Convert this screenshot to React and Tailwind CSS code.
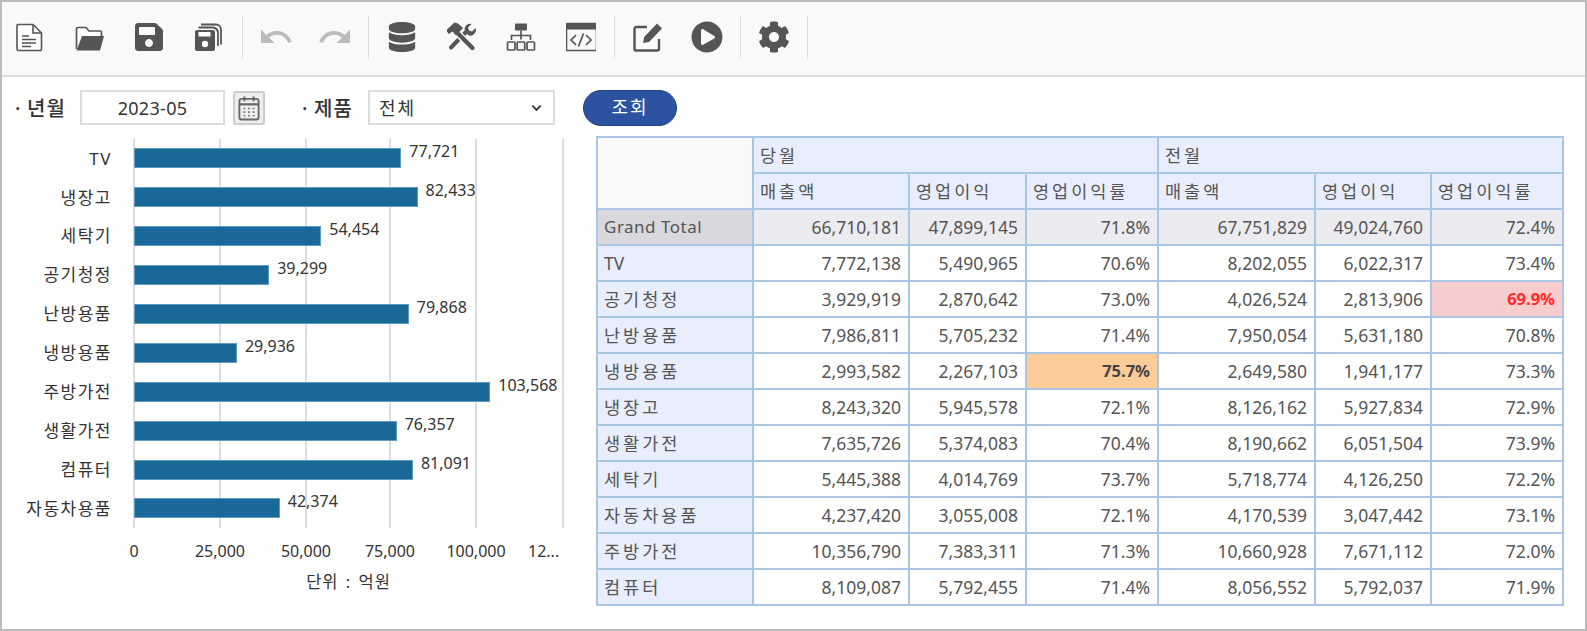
import React from "react";
import { MdUndo, MdRedo } from "react-icons/md";
import { FaDatabase, FaPlayCircle, FaCog, FaSave } from "react-icons/fa";

const C = "#555555";
const Ico = ({ children }) => (
  <svg viewBox="0 0 30 30" className="w-[30px] h-[30px] block" fill="none">{children}</svg>
);
const FileIc = () => (
  <Ico>
    <path d="M3 2.5h15l8.5 8.5v16a1.5 1.5 0 0 1-1.5 1.5H3.5A1.5 1.5 0 0 1 2 27V3.5A1 1 0 0 1 3 2.5z" fill="#fff" stroke={C} strokeWidth="1.6" />
    <path d="M18 2.5V11h8.5" stroke={C} strokeWidth="1.6" />
    <path d="M7 14h7M7 17.5h14M7 21h14M7 24.5h9" stroke={C} strokeWidth="1.5" />
  </Ico>
);
const FolderIc = () => (
  <Ico>
    <path d="M1.5 27V7a1.5 1.5 0 0 1 1.5-1.5h8l3 3.5h11a1.5 1.5 0 0 1 1.5 1.5V14" stroke={C} strokeWidth="1.7" fill="#fff" />
    <path d="M7 14h22l-4 14.5H1.5z" fill={C} />
  </Ico>
);
const SaveAllIc = () => (
  <Ico>
    <path d="M7 2.5h15a5 5 0 0 1 5 5v15" stroke={C} strokeWidth="1.8" />
    <path d="M4.5 5.5h15a6 6 0 0 1 4.5 4.5v14" stroke={C} strokeWidth="1.8" />
    <rect x="1" y="8" width="20" height="21" rx="2" fill={C} />
    <rect x="4.5" y="10" width="12" height="4.5" fill="#fff" />
    <circle cx="11" cy="22" r="3.2" fill="#fff" />
  </Ico>
);
const ToolsIc = () => (
  <Ico>
    <path d="M4 25.5L19 10" stroke={C} strokeWidth="4" strokeLinecap="round" />
    <path d="M17.5 7.5a5.5 5.5 0 0 1 7-5.5l-3.5 3.5 1 3 3 1L28.5 6a5.5 5.5 0 0 1-7.5 7z" fill={C} />
    <path d="M9 9.5L25 26" stroke="#f9f9fb" strokeWidth="7" />
    <path d="M9 9.5L25.5 26" stroke={C} strokeWidth="4.4" strokeLinecap="round" />
    <path d="M-1 8.5L7.5 0.5L11 1.5L16 6L9 13.5L5.5 9.5L2 12z" fill={C} />
  </Ico>
);
const SitemapIc = () => (
  <Ico>
    <rect x="9" y="1.5" width="12" height="7" rx="0.8" fill={C} />
    <path d="M15 8.5v9M5.5 18v-4.5h19V18" stroke={C} strokeWidth="1.7" />
    <rect x="1.5" y="20" width="7.5" height="8" rx="1" stroke={C} strokeWidth="1.7" />
    <rect x="11.2" y="20" width="7.5" height="8" rx="1" stroke={C} strokeWidth="1.7" />
    <rect x="21" y="20" width="7.5" height="8" rx="1" stroke={C} strokeWidth="1.7" />
  </Ico>
);
const CodeIc = () => (
  <Ico>
    <rect x="0.5" y="1.5" width="30" height="27" rx="1" stroke={C} strokeWidth="1.6" />
    <rect x="0" y="1" width="30" height="6.5" fill={C} />
    <path d="M10 13l-5 5 5 5M20 13l5 5-5 5M17.5 11.5l-5 13" stroke={C} strokeWidth="1.7" />
  </Ico>
);
const EditIc = () => (
  <Ico>
    <path d="M14 5H3.5A2 2 0 0 0 1.5 7v20a1.5 1.5 0 0 0 1.5 1.5h21a2 2 0 0 0 2-2V17" stroke={C} strokeWidth="2.4" />
    <path d="M10 21l1.2-6L24 1.5l5 5L16 20z" fill={C} />
  </Ico>
);
const CalIc = () => (
  <svg viewBox="0 0 24 28" className="w-[22px] h-[26px] block" fill="none">
    <rect x="1.5" y="4" width="21" height="22.5" rx="2.5" stroke="#666" strokeWidth="2" />
    <path d="M1.5 10h21" stroke="#666" strokeWidth="2.4" />
    <path d="M7 1.5v5M17 1.5v5" stroke="#666" strokeWidth="2.2" />
    <path d="M6 14.5h2M11 14.5h2M16 14.5h2M6 18.5h2M11 18.5h2M16 18.5h2M6 22.5h2M11 22.5h2M16 22.5h2" stroke="#777" strokeWidth="1.8" />
  </svg>
);
const Btn = ({ children }) => (
  <div className="w-[30px] h-[30px] flex items-center justify-center shrink-0">{children}</div>
);
const Sep = () => <div className="w-px h-[43px] bg-[#dddddd] shrink-0" />;

const bars = [
  ["TV", 77721],
  ["냉장고", 82433],
  ["세탁기", 54454],
  ["공기청정", 39299],
  ["난방용품", 79868],
  ["냉방용품", 29936],
  ["주방가전", 103568],
  ["생활가전", 76357],
  ["컴퓨터", 81091],
  ["자동차용품", 42374],
];
const grid = [0, 86, 172, 256, 342, 429];
const ticks = [
  ["0", 0],
  ["25,000", 86],
  ["50,000", 172],
  ["75,000", 256],
  ["100,000", 342],
];

const rows = [
  ["TV", "7,772,138", "5,490,965", "70.6%", "8,202,055", "6,022,317", "73.4%"],
  ["공기청정", "3,929,919", "2,870,642", "73.0%", "4,026,524", "2,813,906", "69.9%"],
  ["난방용품", "7,986,811", "5,705,232", "71.4%", "7,950,054", "5,631,180", "70.8%"],
  ["냉방용품", "2,993,582", "2,267,103", "75.7%", "2,649,580", "1,941,177", "73.3%"],
  ["냉장고", "8,243,320", "5,945,578", "72.1%", "8,126,162", "5,927,834", "72.9%"],
  ["생활가전", "7,635,726", "5,374,083", "70.4%", "8,190,662", "6,051,504", "73.9%"],
  ["세탁기", "5,445,388", "4,014,769", "73.7%", "5,718,774", "4,126,250", "72.2%"],
  ["자동차용품", "4,237,420", "3,055,008", "72.1%", "4,170,539", "3,047,442", "73.1%"],
  ["주방가전", "10,356,790", "7,383,311", "71.3%", "10,660,928", "7,671,112", "72.0%"],
  ["컴퓨터", "8,109,087", "5,792,455", "71.4%", "8,056,552", "5,792,037", "71.9%"],
];
const total = ["66,710,181", "47,899,145", "71.8%", "67,751,829", "49,024,760", "72.4%"];
const widths = [156, 156, 117, 132, 157, 116, 132];
const cellBase = "border-2 border-[#a9c6e4] pl-[6px] pr-[7px] h-[36px] overflow-hidden whitespace-nowrap";

function Chart() {
  return (
    <div className="w-[594px] shrink-0 pt-[14px] text-[#333333]">
      <div className="relative">
        {grid.map((x) => (
          <div key={x} className="absolute top-0 w-[2px] h-[389px] bg-[#dddddd]" style={{ left: 131 + x }} />
        ))}
        {bars.map(([name, v]) => (
          <div key={name} className="relative flex items-center h-[38.9px]">
            <div className="w-[132px] pr-[22px] text-right text-[17px] tracking-[1.5px] shrink-0">{name}</div>
            <div className="h-5 bg-[#1a6898] border border-[#5f9cc0]" style={{ width: v * 0.00344 }} />
            <div className="ml-[8px] -translate-y-[7px] text-[16px] leading-[20px]">{v.toLocaleString("en-US")}</div>
          </div>
        ))}
        <div className="relative h-[40px] text-[16px] leading-[20px]">
          {ticks.map(([t, x]) => (
            <div key={t} className="absolute top-[13px] -translate-x-1/2" style={{ left: 132 + x }}>{t}</div>
          ))}
          <div className="absolute top-[13px] left-[526px]">12...</div>
        </div>
      </div>
      <div className="pl-[132px] w-[561px] text-center text-[16.5px] tracking-[1px] leading-[20px] mt-[4px] [word-spacing:2px]">단위 : 억원</div>
    </div>
  );
}

function DataTable() {
  const th = "bg-[#e8eefd] font-normal text-left tracking-[3px]";
  return (
    <div className="pt-[11px]">
      <table className="table-fixed border-collapse w-[966px] text-[#555555] text-[17.5px]">
        <colgroup>
          {widths.map((w, i) => <col key={i} style={{ width: w }} />)}
        </colgroup>
        <thead>
          <tr>
            <th rowSpan={2} className={`${cellBase} bg-[#f9f9fc]`} />
            <th colSpan={3} className={`${cellBase} ${th}`}>당월</th>
            <th colSpan={3} className={`${cellBase} ${th}`}>전월</th>
          </tr>
          <tr>
            {["매출액", "영업이익", "영업이익률", "매출액", "영업이익", "영업이익률"].map((t, i) => (
              <th key={i} className={`${cellBase} ${th}`}>{t}</th>
            ))}
          </tr>
        </thead>
        <tbody>
          <tr>
            <td className={`${cellBase} bg-[#d9d8dc] text-[17px] tracking-[0.5px]`}>Grand Total</td>
            {total.map((t, i) => (
              <td key={i} className={`${cellBase} bg-[#ecebef] text-right`}>{t}</td>
            ))}
          </tr>
          {rows.map((r) => (
            <tr key={r[0]}>
              <td className={`${cellBase} bg-[#e8eefd] ${r[0] === "TV" ? "" : "tracking-[3px]"}`}>{r[0]}</td>
              {r.slice(1).map((t, i) => {
                if (t === "75.7%") return <td key={i} className={`${cellBase} bg-[#fbcb98] text-right font-bold text-[16.5px] text-[#444444]`}>{t}</td>;
                if (t === "69.9%") return <td key={i} className={`${cellBase} bg-[#f6cccc] text-right font-bold text-[16.5px] text-[#ff2a2a]`}>{t}</td>;
                return <td key={i} className={`${cellBase} bg-white text-right`}>{t}</td>;
              })}
            </tr>
          ))}
        </tbody>
      </table>
    </div>
  );
}

export default function App() {
  return (
    <div className="w-[1587px] h-[631px] border-2 border-[#bbbbbb] bg-white overflow-hidden font-['Noto_Sans','Noto_Sans_CJK_KR',sans-serif]">
      <header className="h-[75px] bg-[#f9f9fb] border-b-2 border-[#dddddd] flex items-center pb-[3px] pl-[13px] text-[#555555]">
        <div className="flex items-center gap-[29.5px] pr-[18px]">
          <Btn><FileIc /></Btn>
          <Btn><FolderIc /></Btn>
          <Btn><FaSave size={32} color={C} className="shrink-0" /></Btn>
          <Btn><SaveAllIc /></Btn>
        </div>
        <Sep />
        <div className="flex items-center gap-[29.5px] px-[18px]">
          <Btn><MdUndo size={36} color="#bbbbbb" className="shrink-0" /></Btn>
          <Btn><MdRedo size={36} color="#bbbbbb" className="shrink-0" /></Btn>
        </div>
        <Sep />
        <div className="flex items-center gap-[29.5px] px-[18px]">
          <Btn><FaDatabase size={30} color={C} /></Btn>
          <Btn><ToolsIc /></Btn>
          <Btn><SitemapIc /></Btn>
          <Btn><CodeIc /></Btn>
        </div>
        <Sep />
        <div className="flex items-center gap-[29.5px] px-[18px]">
          <Btn><EditIc /></Btn>
          <Btn><FaPlayCircle size={32} color={C} className="shrink-0" /></Btn>
        </div>
        <Sep />
        <div className="flex items-center px-[18px]">
          <Btn><FaCog size={32} color={C} className="shrink-0" /></Btn>
        </div>
        <Sep />
      </header>

      <div className="flex items-center h-[35px] mt-[13px] pl-[13px] text-[#333333]">
        <div className="w-[65px] text-[20px] tracking-[1px] font-medium pt-[3px] flex"><span className="w-[12px]">·</span><span>년월</span></div>
        <div className="w-[145px] h-[35px] border-2 border-[#dddddd] flex items-center justify-center text-[18px] tracking-[0.3px] pt-[2px]">2023-05</div>
        <div className="w-[32px] h-[34px] ml-[8px] bg-[#eeeeee] border-2 border-[#cccccc] rounded-[3px] flex items-center justify-center"><CalIc /></div>
        <div className="w-[68px] ml-[35px] text-[20px] tracking-[1px] font-medium pt-[3px] flex"><span className="w-[12px] pl-[2px]">·</span><span className="ml-[2px]">제품</span></div>
        <div className="w-[187px] h-[35px] border-2 border-[#dddddd] flex items-center justify-between pl-[9px] pr-[11px] text-[18px] tracking-[2px] pt-[1px]">
          <span>전체</span>
          <svg viewBox="0 0 12 8" className="w-[11px] h-[8px]" fill="none"><path d="M1.5 1.5L6 6l4.5-4.5" stroke="#333" strokeWidth="2" /></svg>
        </div>
        <div className="w-[94px] h-[36px] ml-[28px] bg-[#2b539f] border border-[#1f4286] rounded-full flex items-center justify-center text-white text-[18px] tracking-[2px]">조회</div>
      </div>

      <div className="flex">
        <Chart />
        <DataTable />
      </div>
    </div>
  );
}
